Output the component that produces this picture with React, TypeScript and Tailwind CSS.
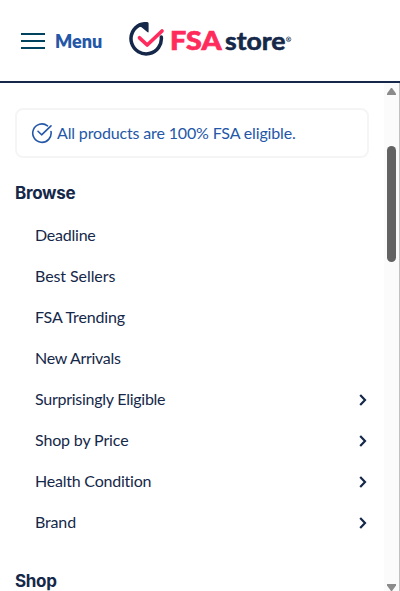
import React from "react";

type Item = { label: string; tracking: string; arrow?: boolean };

const items: Item[] = [
  { label: "Deadline", tracking: "tracking-[-0.23px]" },
  { label: "Best Sellers", tracking: "tracking-[-0.08px]" },
  { label: "FSA Trending", tracking: "tracking-[-0.16px]" },
  { label: "New Arrivals", tracking: "tracking-[-0.3px]" },
  { label: "Surprisingly Eligible", tracking: "tracking-[-0.26px]", arrow: true },
  { label: "Shop by Price", tracking: "tracking-[-0.15px]", arrow: true },
  { label: "Health Condition", tracking: "tracking-[-0.22px]", arrow: true },
  { label: "Brand", tracking: "tracking-[-0.15px]", arrow: true },
];

function Logo() {
  return (
    <svg width="166" height="38" viewBox="0 0 166 38" className="ml-[2px]" aria-label="FSA store">
      <path d="M11.5 4.6A15.2 15.2 0 1 0 32.3 17" fill="none" stroke="#152849" strokeWidth="3.5" strokeLinecap="round" />
      <path d="M7 5.2C11 2.2 15.5 1.9 18.2 2Q19.6 2 19.6 3.5V11.4Q19.6 13 18.3 12L12.5 7.2Z" fill="#152849" />
      <path d="M10.5 17.8L18.2 25L33 11" fill="none" stroke="#ff2b5c" strokeWidth="3.7" strokeLinecap="round" strokeLinejoin="round" />
      <text x="41" y="30" textLength="51.5" lengthAdjust="spacingAndGlyphs" fill="#ff2b5c" stroke="#ff2b5c" strokeWidth=".7" className="font-[Lato,sans-serif] text-[27px] font-black">FSA</text>
      <text x="96" y="30" textLength="60.5" lengthAdjust="spacingAndGlyphs" fill="#152849" stroke="#152849" strokeWidth=".6" className="font-[Lato,sans-serif] text-[25px] font-bold">store</text>
      <circle cx="159.6" cy="19.3" r="2.3" fill="none" stroke="#152849" strokeWidth=".6" />
      <text x="158.3" y="20.8" fill="#152849" className="font-[Lato,sans-serif] text-[4px] font-bold">R</text>
    </svg>
  );
}

export default function App() {
  return (
    <div className="flex h-[591px] w-[400px] flex-col overflow-hidden bg-white font-[Lato,sans-serif] text-[#152849]">
      <header className="flex h-[83px] shrink-0 items-start border-b-2 border-[#152849] pt-5 pl-[21px]">
        <div className="mt-[13px] flex w-6 flex-col gap-[5px]">
          <span className="h-[2px] bg-[#00435f]" />
          <span className="h-[2px] bg-[#00435f]" />
          <span className="h-[2px] bg-[#00435f]" />
        </div>
        <span className="mt-[9px] ml-[10px] w-[72px] text-[18px] leading-6 font-extrabold whitespace-nowrap text-[#2457a7]">Menu</span>
        <Logo />
      </header>
      <div className="flex min-h-0 flex-1">
        <main className="w-96 pt-[25px] pl-[15px]">
          <div className="flex h-[50px] w-[354px] items-center rounded-lg border-2 border-[#f5f5f5] pl-[14px] text-[#2457a7]">
            <svg width="22" height="22" viewBox="0 0 22 22" fill="none" stroke="currentColor" strokeWidth="1.6" strokeLinecap="round" strokeLinejoin="round">
              <path d="M16.5 3.8A9.2 9.2 0 1 0 20 9.5" />
              <path d="M7 9.3L10.6 12.8L20 3.8" />
            </svg>
            <span className="ml-1 text-base tracking-[-0.15px] whitespace-nowrap">All products are 100% FSA eligible.</span>
          </div>
          <h2 className="mt-[23px] h-6 font-[Inter,sans-serif] text-[17px] leading-6 font-bold tracking-[-0.3px]">Browse</h2>
          <ul className="mt-[10px]">
            {items.map((item) => (
              <li key={item.label} className="flex h-[41px] items-center justify-between pr-[17px] pl-5 text-base">
                <span className={`pb-[2px] ${item.tracking}`}>{item.label}</span>
                {item.arrow && (
                  <svg width="8" height="13" viewBox="0 0 8 13" fill="none" stroke="#152849" strokeWidth="2.2">
                    <path d="M1.2 2L6 7L1.2 12" />
                  </svg>
                )}
              </li>
            ))}
          </ul>
          <h2 className="mt-[26px] h-6 font-[Inter,sans-serif] text-[17px] leading-6 font-bold tracking-[-0.3px]">Shop</h2>
        </main>
        <div className="flex w-4 flex-col items-center justify-between border-r border-[#c1c1c1] bg-[#fbfbfb] pt-[5px]">
          <svg width="9" height="7" viewBox="0 0 9 7" fill="#8b8b8b"><path d="M4 0h1L9 5.5V7H0V5.5Z" /></svg>
          <div className="mt-[51px] h-[116px] w-[9px] rounded-full bg-[#636363]" />
          <svg width="9" height="7" viewBox="0 0 9 7" className="mt-auto" fill="#8b8b8b"><path d="M0 0H9V1.5L5 7H4L0 1.5Z" /></svg>
        </div>
      </div>
    </div>
  );
}
